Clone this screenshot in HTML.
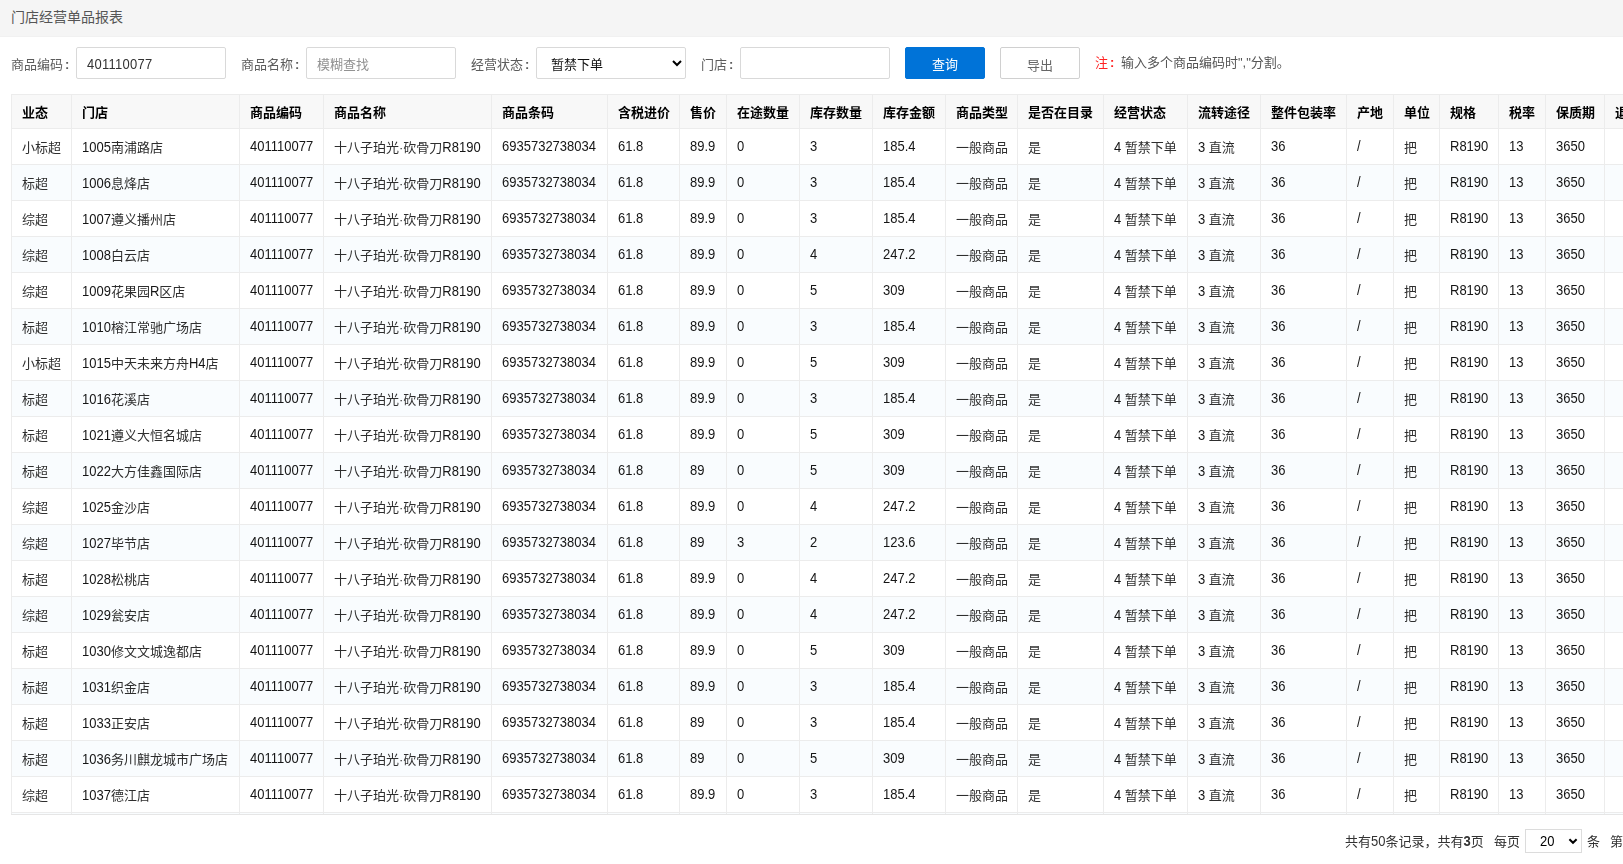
<!DOCTYPE html>
<html lang="zh-CN">
<head>
<meta charset="utf-8">
<title>门店经营单品报表</title>
<style>
*{box-sizing:border-box;}
html,body{margin:0;padding:0;}
body{width:1623px;height:864px;overflow:hidden;background:#fff;color:#333;font-family:"Liberation Sans","Noto Sans CJK SC",sans-serif;font-size:13px;position:relative;}
.topbar{position:absolute;left:0;top:0;width:1623px;height:37px;background:#f5f5f5;border-bottom:1px solid #f1f1f1;}
.topbar .title{position:absolute;left:11px;top:0;line-height:34px;font-size:14px;color:#555;}
.search{position:absolute;left:0;top:47px;height:32px;width:1623px;will-change:transform;}
.search .lbl{position:absolute;top:2px;line-height:32px;color:#5c5c5c;font-size:13px;white-space:nowrap;}
.search .inp{position:absolute;top:0;height:32px;width:150px;border:1px solid #d9d9d9;border-radius:2px;background:#fff;padding:2px 10px 0;line-height:30px;font-size:13px;color:#333;white-space:nowrap;}
.search .inp.ph{color:#929292;}
.search .sel{color:#111;padding-left:14px;}
.chev{position:absolute;left:671px;top:59px;}
.btn{position:absolute;top:0;height:32px;width:80px;border-radius:2px;text-align:center;line-height:30px;font-size:13px;}
.btn.primary{background:#0073d8;color:#fff;border:1px solid #0073d8;padding-top:2px;}
.btn.plain{background:#fff;color:#666;border:1px solid #d0d0d0;padding-top:3px;}
.note{position:absolute;top:1px;line-height:30px;font-size:13px;color:#555;white-space:nowrap;}
.note b{color:#f22;font-weight:normal;}
.colon{margin-left:2px;font-weight:bold;}
.tablewrap{position:absolute;left:11px;top:94px;width:1612px;height:721px;overflow:hidden;border-bottom:1px solid #e6e6e6;will-change:transform;}
table{border-collapse:collapse;table-layout:fixed;width:1679px;}
th,td{border:1px solid #ececec;padding:0 10px;text-align:left;white-space:nowrap;overflow:hidden;font-size:13px;}
th{height:34px;background:#f8f8f8;color:#000;font-weight:bold;}
td{height:36px;color:#2e2e2e;}
td .c{color:#151515;}
tbody tr:nth-child(even) td{background:#f9fcfe;}
i{font-style:normal;}
.c{display:inline-block;transform:scaleY(1.11);transform-origin:0 78%;}
.pager{position:absolute;top:826px;left:0;width:1623px;height:30px;font-size:13px;color:#333;will-change:transform;}
.pager span{position:absolute;top:1px;line-height:30px;white-space:nowrap;}
.pager .psel{position:absolute;left:1525px;top:3px;width:57px;height:24px;border:1px solid #dcdcdc;border-radius:0;background:#fff;}
</style>
</head>
<body>
<div class="topbar"><div class="title">门店经营单品报表</div></div>
<div class="search">
  <div class="lbl" style="left:11px">商品编码<span class="colon">:</span></div>
  <div class="inp" style="left:76px"><span class="c" style="letter-spacing:0.27px">401110077</span></div>
  <div class="lbl" style="left:241px">商品名称<span class="colon">:</span></div>
  <div class="inp ph" style="left:306px">模糊查找</div>
  <div class="lbl" style="left:471px">经营状态<span class="colon">:</span></div>
  <div class="inp sel" style="left:536px">暂禁下单</div>
  <div class="lbl" style="left:701px">门店<span class="colon">:</span></div>
  <div class="inp" style="left:740px"></div>
  <div class="btn primary" style="left:905px">查询</div>
  <div class="btn plain" style="left:1000px">导出</div>
  <div class="note" style="left:1095px"><b>注<span class="colon">:</span></b></div>
  <div class="note" style="left:1121px">输入多个商品编码时","分割。</div>
</div>
<svg class="chev" width="12" height="8" viewBox="0 0 12 8"><path d="M2 2 L6 6 L10 2" fill="none" stroke="#000" stroke-width="2"/></svg>
<div class="tablewrap">
<table>
<colgroup><col style="width:60px"><col style="width:168px"><col style="width:84px"><col style="width:168px"><col style="width:116px"><col style="width:72px"><col style="width:47px"><col style="width:73px"><col style="width:73px"><col style="width:73px"><col style="width:72px"><col style="width:86px"><col style="width:84px"><col style="width:73px"><col style="width:86px"><col style="width:47px"><col style="width:46px"><col style="width:59px"><col style="width:47px"><col style="width:59px"><col style="width:86px"></colgroup>
<thead><tr><th>业态</th><th>门店</th><th>商品编码</th><th>商品名称</th><th>商品条码</th><th>含税进价</th><th>售价</th><th>在途数量</th><th>库存数量</th><th>库存金额</th><th>商品类型</th><th>是否在目录</th><th>经营状态</th><th>流转途径</th><th>整件包装率</th><th>产地</th><th>单位</th><th>规格</th><th>税率</th><th>保质期</th><th>退货标志</th></tr></thead>
<tbody>
<tr><td>小标超</td><td><span class="c">1005</span>南浦路店</td><td class="n"><span class="c">401110077</span></td><td>十八子珀光·砍骨刀<span class="c">R8190</span></td><td class="n"><span class="c">6935732738034</span></td><td class="n"><span class="c">61.8</span></td><td class="n"><span class="c">89.9</span></td><td class="n"><span class="c">0</span></td><td class="n"><span class="c">3</span></td><td class="n"><span class="c">185.4</span></td><td>一般商品</td><td>是</td><td><span class="c">4</span> 暂禁下单</td><td><span class="c">3</span> 直流</td><td class="n"><span class="c">36</span></td><td class="n"><span class="c">/</span></td><td>把</td><td class="n"><span class="c">R8190</span></td><td class="n"><span class="c">13</span></td><td class="n"><span class="c">3650</span></td><td></td></tr>
<tr><td>标超</td><td><span class="c">1006</span>息烽店</td><td class="n"><span class="c">401110077</span></td><td>十八子珀光·砍骨刀<span class="c">R8190</span></td><td class="n"><span class="c">6935732738034</span></td><td class="n"><span class="c">61.8</span></td><td class="n"><span class="c">89.9</span></td><td class="n"><span class="c">0</span></td><td class="n"><span class="c">3</span></td><td class="n"><span class="c">185.4</span></td><td>一般商品</td><td>是</td><td><span class="c">4</span> 暂禁下单</td><td><span class="c">3</span> 直流</td><td class="n"><span class="c">36</span></td><td class="n"><span class="c">/</span></td><td>把</td><td class="n"><span class="c">R8190</span></td><td class="n"><span class="c">13</span></td><td class="n"><span class="c">3650</span></td><td></td></tr>
<tr><td>综超</td><td><span class="c">1007</span>遵义播州店</td><td class="n"><span class="c">401110077</span></td><td>十八子珀光·砍骨刀<span class="c">R8190</span></td><td class="n"><span class="c">6935732738034</span></td><td class="n"><span class="c">61.8</span></td><td class="n"><span class="c">89.9</span></td><td class="n"><span class="c">0</span></td><td class="n"><span class="c">3</span></td><td class="n"><span class="c">185.4</span></td><td>一般商品</td><td>是</td><td><span class="c">4</span> 暂禁下单</td><td><span class="c">3</span> 直流</td><td class="n"><span class="c">36</span></td><td class="n"><span class="c">/</span></td><td>把</td><td class="n"><span class="c">R8190</span></td><td class="n"><span class="c">13</span></td><td class="n"><span class="c">3650</span></td><td></td></tr>
<tr><td>综超</td><td><span class="c">1008</span>白云店</td><td class="n"><span class="c">401110077</span></td><td>十八子珀光·砍骨刀<span class="c">R8190</span></td><td class="n"><span class="c">6935732738034</span></td><td class="n"><span class="c">61.8</span></td><td class="n"><span class="c">89.9</span></td><td class="n"><span class="c">0</span></td><td class="n"><span class="c">4</span></td><td class="n"><span class="c">247.2</span></td><td>一般商品</td><td>是</td><td><span class="c">4</span> 暂禁下单</td><td><span class="c">3</span> 直流</td><td class="n"><span class="c">36</span></td><td class="n"><span class="c">/</span></td><td>把</td><td class="n"><span class="c">R8190</span></td><td class="n"><span class="c">13</span></td><td class="n"><span class="c">3650</span></td><td></td></tr>
<tr><td>综超</td><td><span class="c">1009</span>花果园<span class="c">R</span>区店</td><td class="n"><span class="c">401110077</span></td><td>十八子珀光·砍骨刀<span class="c">R8190</span></td><td class="n"><span class="c">6935732738034</span></td><td class="n"><span class="c">61.8</span></td><td class="n"><span class="c">89.9</span></td><td class="n"><span class="c">0</span></td><td class="n"><span class="c">5</span></td><td class="n"><span class="c">309</span></td><td>一般商品</td><td>是</td><td><span class="c">4</span> 暂禁下单</td><td><span class="c">3</span> 直流</td><td class="n"><span class="c">36</span></td><td class="n"><span class="c">/</span></td><td>把</td><td class="n"><span class="c">R8190</span></td><td class="n"><span class="c">13</span></td><td class="n"><span class="c">3650</span></td><td></td></tr>
<tr><td>标超</td><td><span class="c">1010</span>榕江常驰广场店</td><td class="n"><span class="c">401110077</span></td><td>十八子珀光·砍骨刀<span class="c">R8190</span></td><td class="n"><span class="c">6935732738034</span></td><td class="n"><span class="c">61.8</span></td><td class="n"><span class="c">89.9</span></td><td class="n"><span class="c">0</span></td><td class="n"><span class="c">3</span></td><td class="n"><span class="c">185.4</span></td><td>一般商品</td><td>是</td><td><span class="c">4</span> 暂禁下单</td><td><span class="c">3</span> 直流</td><td class="n"><span class="c">36</span></td><td class="n"><span class="c">/</span></td><td>把</td><td class="n"><span class="c">R8190</span></td><td class="n"><span class="c">13</span></td><td class="n"><span class="c">3650</span></td><td></td></tr>
<tr><td>小标超</td><td><span class="c">1015</span>中天未来方舟<span class="c">H4</span>店</td><td class="n"><span class="c">401110077</span></td><td>十八子珀光·砍骨刀<span class="c">R8190</span></td><td class="n"><span class="c">6935732738034</span></td><td class="n"><span class="c">61.8</span></td><td class="n"><span class="c">89.9</span></td><td class="n"><span class="c">0</span></td><td class="n"><span class="c">5</span></td><td class="n"><span class="c">309</span></td><td>一般商品</td><td>是</td><td><span class="c">4</span> 暂禁下单</td><td><span class="c">3</span> 直流</td><td class="n"><span class="c">36</span></td><td class="n"><span class="c">/</span></td><td>把</td><td class="n"><span class="c">R8190</span></td><td class="n"><span class="c">13</span></td><td class="n"><span class="c">3650</span></td><td></td></tr>
<tr><td>标超</td><td><span class="c">1016</span>花溪店</td><td class="n"><span class="c">401110077</span></td><td>十八子珀光·砍骨刀<span class="c">R8190</span></td><td class="n"><span class="c">6935732738034</span></td><td class="n"><span class="c">61.8</span></td><td class="n"><span class="c">89.9</span></td><td class="n"><span class="c">0</span></td><td class="n"><span class="c">3</span></td><td class="n"><span class="c">185.4</span></td><td>一般商品</td><td>是</td><td><span class="c">4</span> 暂禁下单</td><td><span class="c">3</span> 直流</td><td class="n"><span class="c">36</span></td><td class="n"><span class="c">/</span></td><td>把</td><td class="n"><span class="c">R8190</span></td><td class="n"><span class="c">13</span></td><td class="n"><span class="c">3650</span></td><td></td></tr>
<tr><td>标超</td><td><span class="c">1021</span>遵义大恒名城店</td><td class="n"><span class="c">401110077</span></td><td>十八子珀光·砍骨刀<span class="c">R8190</span></td><td class="n"><span class="c">6935732738034</span></td><td class="n"><span class="c">61.8</span></td><td class="n"><span class="c">89.9</span></td><td class="n"><span class="c">0</span></td><td class="n"><span class="c">5</span></td><td class="n"><span class="c">309</span></td><td>一般商品</td><td>是</td><td><span class="c">4</span> 暂禁下单</td><td><span class="c">3</span> 直流</td><td class="n"><span class="c">36</span></td><td class="n"><span class="c">/</span></td><td>把</td><td class="n"><span class="c">R8190</span></td><td class="n"><span class="c">13</span></td><td class="n"><span class="c">3650</span></td><td></td></tr>
<tr><td>标超</td><td><span class="c">1022</span>大方佳鑫国际店</td><td class="n"><span class="c">401110077</span></td><td>十八子珀光·砍骨刀<span class="c">R8190</span></td><td class="n"><span class="c">6935732738034</span></td><td class="n"><span class="c">61.8</span></td><td class="n"><span class="c">89</span></td><td class="n"><span class="c">0</span></td><td class="n"><span class="c">5</span></td><td class="n"><span class="c">309</span></td><td>一般商品</td><td>是</td><td><span class="c">4</span> 暂禁下单</td><td><span class="c">3</span> 直流</td><td class="n"><span class="c">36</span></td><td class="n"><span class="c">/</span></td><td>把</td><td class="n"><span class="c">R8190</span></td><td class="n"><span class="c">13</span></td><td class="n"><span class="c">3650</span></td><td></td></tr>
<tr><td>综超</td><td><span class="c">1025</span>金沙店</td><td class="n"><span class="c">401110077</span></td><td>十八子珀光·砍骨刀<span class="c">R8190</span></td><td class="n"><span class="c">6935732738034</span></td><td class="n"><span class="c">61.8</span></td><td class="n"><span class="c">89.9</span></td><td class="n"><span class="c">0</span></td><td class="n"><span class="c">4</span></td><td class="n"><span class="c">247.2</span></td><td>一般商品</td><td>是</td><td><span class="c">4</span> 暂禁下单</td><td><span class="c">3</span> 直流</td><td class="n"><span class="c">36</span></td><td class="n"><span class="c">/</span></td><td>把</td><td class="n"><span class="c">R8190</span></td><td class="n"><span class="c">13</span></td><td class="n"><span class="c">3650</span></td><td></td></tr>
<tr><td>综超</td><td><span class="c">1027</span>毕节店</td><td class="n"><span class="c">401110077</span></td><td>十八子珀光·砍骨刀<span class="c">R8190</span></td><td class="n"><span class="c">6935732738034</span></td><td class="n"><span class="c">61.8</span></td><td class="n"><span class="c">89</span></td><td class="n"><span class="c">3</span></td><td class="n"><span class="c">2</span></td><td class="n"><span class="c">123.6</span></td><td>一般商品</td><td>是</td><td><span class="c">4</span> 暂禁下单</td><td><span class="c">3</span> 直流</td><td class="n"><span class="c">36</span></td><td class="n"><span class="c">/</span></td><td>把</td><td class="n"><span class="c">R8190</span></td><td class="n"><span class="c">13</span></td><td class="n"><span class="c">3650</span></td><td></td></tr>
<tr><td>标超</td><td><span class="c">1028</span>松桃店</td><td class="n"><span class="c">401110077</span></td><td>十八子珀光·砍骨刀<span class="c">R8190</span></td><td class="n"><span class="c">6935732738034</span></td><td class="n"><span class="c">61.8</span></td><td class="n"><span class="c">89.9</span></td><td class="n"><span class="c">0</span></td><td class="n"><span class="c">4</span></td><td class="n"><span class="c">247.2</span></td><td>一般商品</td><td>是</td><td><span class="c">4</span> 暂禁下单</td><td><span class="c">3</span> 直流</td><td class="n"><span class="c">36</span></td><td class="n"><span class="c">/</span></td><td>把</td><td class="n"><span class="c">R8190</span></td><td class="n"><span class="c">13</span></td><td class="n"><span class="c">3650</span></td><td></td></tr>
<tr><td>综超</td><td><span class="c">1029</span>瓮安店</td><td class="n"><span class="c">401110077</span></td><td>十八子珀光·砍骨刀<span class="c">R8190</span></td><td class="n"><span class="c">6935732738034</span></td><td class="n"><span class="c">61.8</span></td><td class="n"><span class="c">89.9</span></td><td class="n"><span class="c">0</span></td><td class="n"><span class="c">4</span></td><td class="n"><span class="c">247.2</span></td><td>一般商品</td><td>是</td><td><span class="c">4</span> 暂禁下单</td><td><span class="c">3</span> 直流</td><td class="n"><span class="c">36</span></td><td class="n"><span class="c">/</span></td><td>把</td><td class="n"><span class="c">R8190</span></td><td class="n"><span class="c">13</span></td><td class="n"><span class="c">3650</span></td><td></td></tr>
<tr><td>标超</td><td><span class="c">1030</span>修文文城逸都店</td><td class="n"><span class="c">401110077</span></td><td>十八子珀光·砍骨刀<span class="c">R8190</span></td><td class="n"><span class="c">6935732738034</span></td><td class="n"><span class="c">61.8</span></td><td class="n"><span class="c">89.9</span></td><td class="n"><span class="c">0</span></td><td class="n"><span class="c">5</span></td><td class="n"><span class="c">309</span></td><td>一般商品</td><td>是</td><td><span class="c">4</span> 暂禁下单</td><td><span class="c">3</span> 直流</td><td class="n"><span class="c">36</span></td><td class="n"><span class="c">/</span></td><td>把</td><td class="n"><span class="c">R8190</span></td><td class="n"><span class="c">13</span></td><td class="n"><span class="c">3650</span></td><td></td></tr>
<tr><td>标超</td><td><span class="c">1031</span>织金店</td><td class="n"><span class="c">401110077</span></td><td>十八子珀光·砍骨刀<span class="c">R8190</span></td><td class="n"><span class="c">6935732738034</span></td><td class="n"><span class="c">61.8</span></td><td class="n"><span class="c">89.9</span></td><td class="n"><span class="c">0</span></td><td class="n"><span class="c">3</span></td><td class="n"><span class="c">185.4</span></td><td>一般商品</td><td>是</td><td><span class="c">4</span> 暂禁下单</td><td><span class="c">3</span> 直流</td><td class="n"><span class="c">36</span></td><td class="n"><span class="c">/</span></td><td>把</td><td class="n"><span class="c">R8190</span></td><td class="n"><span class="c">13</span></td><td class="n"><span class="c">3650</span></td><td></td></tr>
<tr><td>标超</td><td><span class="c">1033</span>正安店</td><td class="n"><span class="c">401110077</span></td><td>十八子珀光·砍骨刀<span class="c">R8190</span></td><td class="n"><span class="c">6935732738034</span></td><td class="n"><span class="c">61.8</span></td><td class="n"><span class="c">89</span></td><td class="n"><span class="c">0</span></td><td class="n"><span class="c">3</span></td><td class="n"><span class="c">185.4</span></td><td>一般商品</td><td>是</td><td><span class="c">4</span> 暂禁下单</td><td><span class="c">3</span> 直流</td><td class="n"><span class="c">36</span></td><td class="n"><span class="c">/</span></td><td>把</td><td class="n"><span class="c">R8190</span></td><td class="n"><span class="c">13</span></td><td class="n"><span class="c">3650</span></td><td></td></tr>
<tr><td>标超</td><td><span class="c">1036</span>务川麒龙城市广场店</td><td class="n"><span class="c">401110077</span></td><td>十八子珀光·砍骨刀<span class="c">R8190</span></td><td class="n"><span class="c">6935732738034</span></td><td class="n"><span class="c">61.8</span></td><td class="n"><span class="c">89</span></td><td class="n"><span class="c">0</span></td><td class="n"><span class="c">5</span></td><td class="n"><span class="c">309</span></td><td>一般商品</td><td>是</td><td><span class="c">4</span> 暂禁下单</td><td><span class="c">3</span> 直流</td><td class="n"><span class="c">36</span></td><td class="n"><span class="c">/</span></td><td>把</td><td class="n"><span class="c">R8190</span></td><td class="n"><span class="c">13</span></td><td class="n"><span class="c">3650</span></td><td></td></tr>
<tr><td>综超</td><td><span class="c">1037</span>德江店</td><td class="n"><span class="c">401110077</span></td><td>十八子珀光·砍骨刀<span class="c">R8190</span></td><td class="n"><span class="c">6935732738034</span></td><td class="n"><span class="c">61.8</span></td><td class="n"><span class="c">89.9</span></td><td class="n"><span class="c">0</span></td><td class="n"><span class="c">3</span></td><td class="n"><span class="c">185.4</span></td><td>一般商品</td><td>是</td><td><span class="c">4</span> 暂禁下单</td><td><span class="c">3</span> 直流</td><td class="n"><span class="c">36</span></td><td class="n"><span class="c">/</span></td><td>把</td><td class="n"><span class="c">R8190</span></td><td class="n"><span class="c">13</span></td><td class="n"><span class="c">3650</span></td><td></td></tr>
<tr><td>标超</td><td><span class="c">1038</span>都匀店</td><td class="n"><span class="c">401110077</span></td><td>十八子珀光·砍骨刀<span class="c">R8190</span></td><td class="n"><span class="c">6935732738034</span></td><td class="n"><span class="c">61.8</span></td><td class="n"><span class="c">89.9</span></td><td class="n"><span class="c">0</span></td><td class="n"><span class="c">3</span></td><td class="n"><span class="c">185.4</span></td><td>一般商品</td><td>是</td><td><span class="c">4</span> 暂禁下单</td><td><span class="c">3</span> 直流</td><td class="n"><span class="c">36</span></td><td class="n"><span class="c">/</span></td><td>把</td><td class="n"><span class="c">R8190</span></td><td class="n"><span class="c">13</span></td><td class="n"><span class="c">3650</span></td><td></td></tr>
</tbody>
</table>
</div>
<div class="pager">
  <span style="left:1345px">共有<i class="c">50</i>条记录，共有<b class="c">3</b>页</span>
  <span style="left:1494px">每页</span>
  <div class="psel"><span style="left:14px;top:-3px"><i class="c" style="color:#000">20</i></span><svg style="position:absolute;right:2px;top:7px" width="12" height="8" viewBox="0 0 12 8"><path d="M2.4 2.2 L6 5.8 L9.6 2.2" fill="none" stroke="#000" stroke-width="2"/></svg></div>
  <span style="left:1587px">条</span>
  <span style="left:1610px">第</span>
</div>
</body>
</html>
